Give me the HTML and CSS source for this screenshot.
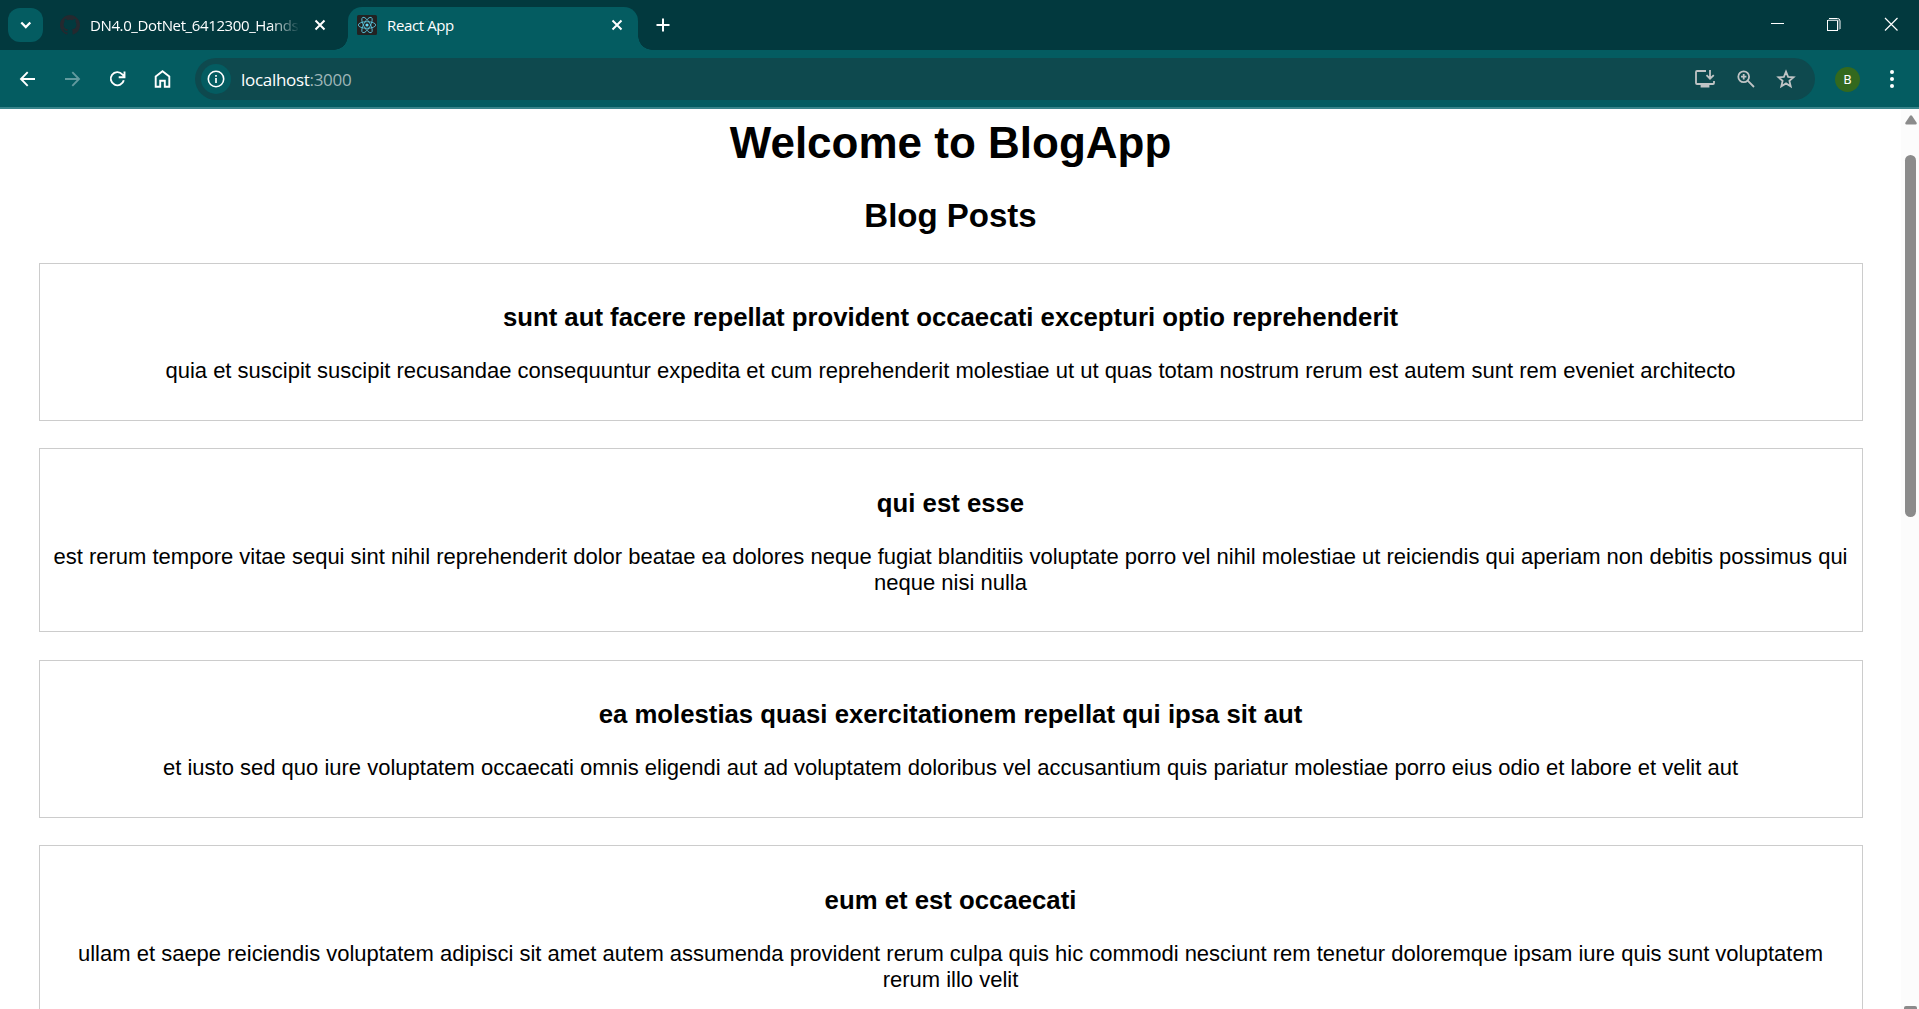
FILE: index.html
```html
<!DOCTYPE html>
<html lang="en">
<head>
<meta charset="utf-8">
<title>React App</title>
<link rel="stylesheet" href="styles.css">
</head>
<body>
<header class="tabstrip">
  <button class="tab-search" aria-label="Search tabs"><svg width="35" height="34" viewBox="0 0 35 34"><path d="M13.3 14.5l4.500 4.500 4.500-4.500" fill="none" stroke="#fff" stroke-width="2.300"/></svg></button>
  <div class="tab">
    <svg class="favicon" width="20" height="20" viewBox="0 0 16 16"><path fill="#24292f" d="M8 0C3.580 0 0 3.580 0 8c0 3.540 2.290 6.530 5.470 7.590.4.070.550-.170.550-.380 0-.190-.010-.820-.010-1.490-2.010.370-2.530-.490-2.690-.940-.090-.230-.480-.940-.820-1.130-.280-.150-.680-.520-.010-.530.630-.010 1.080.580 1.230.820.720 1.210 1.870.870 2.330.660.070-.520.280-.870.510-1.070-1.780-.200-3.640-.890-3.640-3.950 0-.870.310-1.590.820-2.150-.080-.200-.360-1.020.080-2.120 0 0 .670-.210 2.200.820a7.500 7.500 0 0 1 4 0c1.530-1.040 2.200-.820 2.200-.820.440 1.100.160 1.920.080 2.120.510.560.820 1.270.820 2.150 0 3.070-1.870 3.750-3.650 3.950.290.250.540.730.540 1.480 0 1.070-.010 1.930-.010 2.200 0 .210.150.460.550.380A8 8 0 0 0 16 8c0-4.420-3.580-8-8-8z"/></svg>
    <span class="tab-title tab-title-fade">DN4.0_DotNet_6412300_HandsO</span>
    <svg class="close" width="12" height="12" viewBox="0 0 12 12"><path d="M1.500 1.500l9 9M10.500 1.500l-9 9"/></svg>
  </div>
  <div class="tab tab-active">
    <svg class="favicon" width="20" height="20" viewBox="0 0 20 20"><rect width="20" height="20" rx="1.500" fill="#222"/><g fill="none" stroke="#58c4dc" stroke-width=".85"><ellipse cx="10" cy="10" rx="8.700" ry="3.300"/><ellipse cx="10" cy="10" rx="8.700" ry="3.300" transform="rotate(60 10 10)"/><ellipse cx="10" cy="10" rx="8.700" ry="3.300" transform="rotate(120 10 10)"/></g><circle cx="10" cy="10" r="1.600" fill="#61dafb"/></svg>
    <span class="tab-title">React App</span>
    <svg class="close" width="12" height="12" viewBox="0 0 12 12"><path d="M1.500 1.500l9 9M10.500 1.500l-9 9"/></svg>
  </div>
  <svg class="new-tab" width="14" height="14" viewBox="0 0 14 14"><path d="M7 .5v13M.5 7h13" stroke="#fff" stroke-width="2"/></svg>
  <div class="window-controls">
    <svg width="58" height="50" viewBox="0 0 58 50"><path d="M22 23.500h13" stroke="#fff"/></svg>
    <svg width="57" height="50" viewBox="0 0 57 50"><rect x="20.500" y="20.500" width="10" height="10" fill="none" stroke="#fff"/><path d="M22 18.500h8.500q2.500 0 2.500 2.500v8" fill="none" stroke="#fff"/><path d="M21 20h9.500q1.500 0 1.500 2v8" fill="none" stroke="#7f9a9d" stroke-width="1"/></svg>
    <svg width="57" height="50" viewBox="0 0 57 50"><path d="M21 18l12.500 12.500M33.500 18L21 30.500" stroke="#fff" stroke-width="1.200"/></svg>
  </div>
</header>
<nav class="toolbar">
  <svg class="nav-icon" width="18" height="18" viewBox="0 0 18 18"><path d="M16 9H2.500M8.700 2.200L2 9l6.700 6.800"/></svg>
  <svg class="nav-icon nav-disabled" width="18" height="18" viewBox="0 0 18 18"><path d="M1 9h14M8.300 2.200L15 9l-6.700 6.800"/></svg>
  <svg class="nav-icon" width="18" height="18" viewBox="0 0 18 18"><path d="M14.800 10.300a6.600 6.600 0 1 1-1.500-6L15.500 6.500M15.500 1.500v5.700h-5.800"/></svg>
  <svg class="nav-icon" width="18" height="20" viewBox="0 0 18 20"><path d="M1.700 7.500L8.500 2.200l6.800 5.300v10.300h-4.500v-6H6.200v6H1.700z"/></svg>
  <div class="omnibox">
    <span class="site-info"><svg width="18" height="18" viewBox="0 0 18 18"><circle cx="9" cy="9" r="7.700" fill="none" stroke="#fff" stroke-width="1.600"/><path d="M9 8v5M9 5v1.700" stroke="#fff" stroke-width="1.700"/></svg></span>
    <span class="url">localhost<span class="port">:3000</span></span>
    <div class="page-actions">
      <svg width="22" height="20" viewBox="0 0 22 20"><path d="M12 2H3Q2 2 2 3v11q0 1 1 1h16q1 0 1-1v-2M16 1v8M12.500 6.200L16 9.700l3.800-3.500"/><path d="M7.500 15h7v2.500h-7z" fill="#c0c4c5"/></svg>
      <svg width="20" height="20" viewBox="0 0 20 20"><circle cx="7.700" cy="7.700" r="5.400"/><path d="M11.700 11.700l6.300 6.300M7.700 5v5.400M5 7.700h5.400"/></svg>
      <svg width="20" height="20" viewBox="0 0 20 20"><path d="M10 2.700l2.100 5.100 5.500.5-4.200 3.600 1.300 5.400-4.700-2.900-4.700 2.900 1.300-5.400-4.200-3.600 5.500-.5z"/></svg>
    </div>
  </div>
  <span class="avatar">B</span>
  <svg class="menu" width="6" height="20" viewBox="0 0 6 20" fill="#fff"><circle cx="3" cy="3" r="2"/><circle cx="3" cy="10" r="2"/><circle cx="3" cy="17" r="2"/></svg>
</nav>
<div class="viewport">
  <main class="blog">
    <h1>Welcome to BlogApp</h1>
    <h2>Blog Posts</h2>
    <article class="post"><h3>sunt aut facere repellat provident occaecati excepturi optio reprehenderit</h3><p>quia et suscipit suscipit recusandae consequuntur expedita et cum reprehenderit molestiae ut ut quas totam nostrum rerum est autem sunt rem eveniet architecto</p></article>
    <article class="post"><h3>qui est esse</h3><p>est rerum tempore vitae sequi sint nihil reprehenderit dolor beatae ea dolores neque fugiat blanditiis voluptate porro vel nihil molestiae ut reiciendis qui aperiam non debitis possimus qui neque nisi nulla</p></article>
    <article class="post"><h3>ea molestias quasi exercitationem repellat qui ipsa sit aut</h3><p>et iusto sed quo iure voluptatem occaecati omnis eligendi aut ad voluptatem doloribus vel accusantium quis pariatur molestiae porro eius odio et labore et velit aut</p></article>
    <article class="post"><h3>eum et est occaecati</h3><p>ullam et saepe reiciendis voluptatem adipisci sit amet autem assumenda provident rerum culpa quis hic commodi nesciunt rem tenetur doloremque ipsam iure quis sunt voluptatem rerum illo velit</p></article>
  </main>
  <div class="scrollbar">
    <svg width="12" height="10" viewBox="0 0 12 10"><path d="M5 .8q1-1.200 2 0l4.500 6.700q.8 1.900-1 1.900h-9q-1.800 0-1-1.900z" fill="#8b8b8b"/></svg>
    <div class="thumb"></div>
    <div class="arrow-down"></div>
  </div>
</div>
</body>
</html>
```
FILE: styles.css
```css
* { box-sizing: border-box; }
html, body { height: 100%; }
body {
  margin: 0;
  display: flex;
  flex-direction: column;
  overflow: hidden;
  background: #fff;
  font-family: "Liberation Sans", Arial, sans-serif;
}
svg { display: block; flex: none; }

.tabstrip {
  display: flex;
  align-items: center;
  height: 50px;
  flex: none;
  padding-left: 8px;
  background: #02393e;
  color: #fff;
  font: 15px "Open Sans", "Noto Sans", sans-serif;
}
.tab-search {
  width: 35px;
  height: 34px;
  padding: 0;
  border: 0;
  border-radius: 12px;
  background: #045c61;
}
.tab {
  display: flex;
  align-items: center;
  width: 305px;
  height: 43px;
  padding: 0 22px 7px 17px;
  margin-top: 7px;
}
.tab-active {
  position: relative;
  width: 290px;
  padding: 0 15px 7px 9px;
  border-radius: 14px 14px 0 0;
  background: #045c61;
}
.tab-active::before,
.tab-active::after {
  content: "";
  position: absolute;
  bottom: 0;
  width: 14px;
  height: 14px;
}
.tab-active::before {
  right: 100%;
  background: radial-gradient(circle at 0 0, transparent 13.5px, #045c61 14px);
}
.tab-active::after {
  left: 100%;
  background: radial-gradient(circle at 100% 0, transparent 13.5px, #045c61 14px);
}
.tab-title {
  flex: 1;
  min-width: 0;
  margin-left: 10px;
  overflow: hidden;
  white-space: nowrap;
  letter-spacing: -0.38px;
}
.tab-title-fade {
  flex: 0 0 214px;
  margin-left: 10px;
  margin-right: 10px;
  -webkit-mask-image: linear-gradient(to right, #000 180px, transparent 210px);
  mask-image: linear-gradient(to right, #000 180px, transparent 210px);
}
.close { stroke: #fff; stroke-width: 2; }
.new-tab { margin-left: 18px; }
.window-controls { display: flex; margin-left: auto; margin-right: -2px; }

.toolbar {
  display: flex;
  align-items: center;
  height: 59px;
  flex: none;
  padding: 1px 24px 0 19px;
  border-bottom: 2px solid #38848a;
  background: #045c61;
  color: #fff;
}
.nav-icon { margin-right: 27px; fill: none; stroke: #fff; stroke-width: 1.9; }
.nav-disabled { stroke: #629a9e; }
.omnibox {
  display: flex;
  align-items: center;
  flex: 1;
  height: 42px;
  margin-left: -4px;
  padding: 0 19px 0 6px;
  border-radius: 21px;
  background: #0e494e;
  font: 17px "Open Sans", "Noto Sans", sans-serif;
}
.site-info {
  display: grid;
  place-items: center;
  width: 30px;
  height: 30px;
  border-radius: 50%;
  background: #045c61;
}
.url { margin-left: 10px; letter-spacing: -0.3px; }
.port { color: #9fb6b8; }
.page-actions {
  display: flex;
  align-items: center;
  gap: 20px;
  margin-left: auto;
}
.page-actions svg { fill: none; stroke: #c0c4c5; stroke-width: 1.8; }
.avatar {
  display: grid;
  place-items: center;
  width: 25px;
  height: 25px;
  margin-left: 20px;
  border-radius: 50%;
  background: #33691e;
  font: 13px Roboto, sans-serif;
}
.menu { margin-left: 29px; }

.viewport {
  display: flex;
  flex: 1;
  min-height: 0;
  overflow: hidden;
}
.blog {
  width: 1901px;
  flex: none;
  padding: 9px 38.5px 0;
  text-align: center;
  font-size: 22px;
  line-height: 26px;
}
h1 { margin: 0 0 28.5px; font-size: 44px; line-height: 50px; }
h2 { margin: 0 0 28.5px; font-size: 33px; line-height: 38px; }
.post {
  margin-bottom: 27.5px;
  padding: 13.75px;
  border: 1px solid #ccc;
}
h3 { margin: 25.74px 0; font-size: 25.74px; line-height: 29px; }
p { margin: 0 0 22px; }

.scrollbar {
  display: flex;
  flex-direction: column;
  align-items: center;
  width: 18px;
  padding: 6px 0 0 1px;
  background: #fcfcfc;
}
.thumb {
  width: 11px;
  height: 362px;
  margin-top: 30px;
  border-radius: 6px;
  background: #8b8b8b;
}
.arrow-down {
  width: 13px;
  height: 3px;
  margin-top: auto;
  border-radius: 2px 2px 0 0;
  background: #8b8b8b;
}
```
